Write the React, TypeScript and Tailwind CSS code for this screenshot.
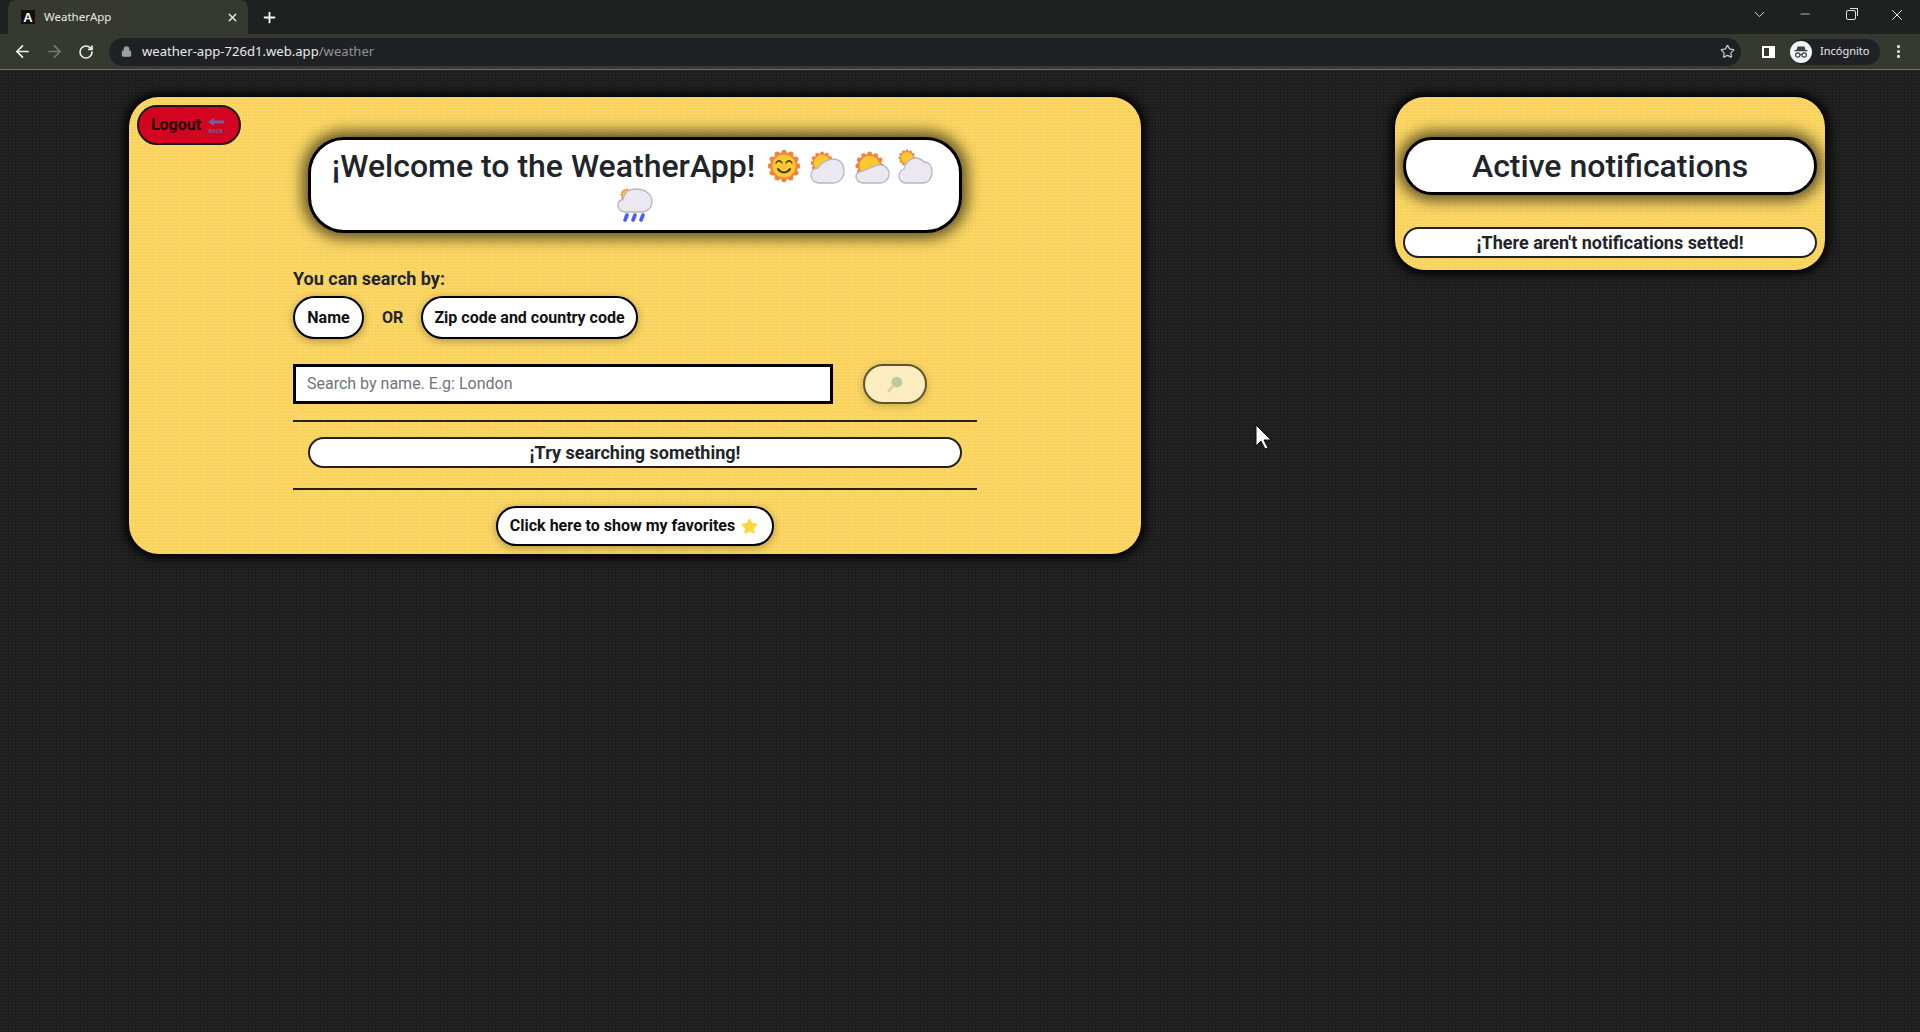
import React from "react";
import { ArrowLeft, ArrowRight, RotateCw, Lock, Star, X, Plus, ChevronDown, Minus, EllipsisVertical } from "lucide-react";

function SunSpikes({ cx, cy, r }: { cx: number; cy: number; r: number }) {
  const pts = Array.from({ length: 12 }, (_, i) => (i * Math.PI) / 6);
  return (
    <g>
      {pts.map((a, i) => (
        <circle key={i} cx={cx + Math.cos(a) * r} cy={cy + Math.sin(a) * r} r={r * 0.2} fill="#f4813f" />
      ))}
      <circle cx={cx} cy={cy} r={r} fill="#f4813f" />
      <circle cx={cx} cy={cy} r={r * 0.86} fill="#fdc92e" />
    </g>
  );
}

function SunFace() {
  return (
    <svg viewBox="0 0 36 36" className="w-[36px] h-[36px] shrink-0">
      <SunSpikes cx={18} cy={18} r={13.5} />
      <path d="M10 15c1.500-3 4.500-3 6 0M20 15c1.500-3 4.500-3 6 0" stroke="#3b2f20" strokeWidth="1.300" fill="none" strokeLinecap="round" />
      <path d="M12 21c3 4.500 9 4.500 12 0" stroke="#3b2f20" strokeWidth="2" fill="none" strokeLinecap="round" />
    </svg>
  );
}

function Cloud({ cx, cy, r, d }: { cx: number; cy: number; r: number; d: string }) {
  return (
    <svg viewBox="0 0 36 36" className="w-[36px] h-[36px] shrink-0">
      <SunSpikes cx={cx} cy={cy} r={r} />
      <path d={d} fill="#ece8f2" stroke="#b9b5c4" strokeWidth="1.300" />
    </svg>
  );
}

function RainCloud() {
  return (
    <svg viewBox="0 0 36 36" className="w-[36px] h-[36px] shrink-0 -mt-[1px]">
      <SunSpikes cx={10} cy={8} r={5.500} />
      <path d="M8 25C4 25 1 22 1 18.500C1 15 3 13 6 12.500C7 6 12 2 19 2C28 2 35 7 35 14.500C35 21 30 25 24 25Z" fill="#ece8f2" stroke="#b9b5c4" strokeWidth="1.300" />
      <path d="M10 28l-2 5M18 28l-2 5M26 28l-2 5" stroke="#4a5ff0" strokeWidth="3.600" strokeLinecap="round" />
    </svg>
  );
}

function BackIcon() {
  return (
    <svg viewBox="0 0 18 18" className="w-[18px] h-[18px] shrink-0">
      <path d="M1 6l6-4v2.500h10v3H7V10z" fill="#6d5fa8" />
      <text x="9" y="16.500" fontSize="5.500" fontWeight="700" textAnchor="middle" fill="#6d5fa8" fontFamily="Roboto, sans-serif">BACK</text>
    </svg>
  );
}

function Incognito() {
  return (
    <svg viewBox="0 0 22 22" className="w-[22px] h-[22px] shrink-0">
      <circle cx="11" cy="11" r="11" fill="#f1f3f4" />
      <path d="M7.500 5.500h7l1 3.500h2v1.300h-13V9h2z" fill="#3c4043" />
      <circle cx="7.800" cy="14" r="2.200" fill="none" stroke="#3c4043" strokeWidth="1.200" />
      <circle cx="14.200" cy="14" r="2.200" fill="none" stroke="#3c4043" strokeWidth="1.200" />
      <path d="M10 13.500h2" stroke="#3c4043" strokeWidth="1.200" />
    </svg>
  );
}

function BrowserChrome() {
  return (
    <div className="h-[70px] flex flex-col bg-[#1f2120] font-['Noto_Sans',sans-serif]">
      <div className="h-[34px] flex items-end pl-[8px]">
        <div className="w-[240px] h-[34px] bg-[#36392f] rounded-t-[8px] flex items-center pl-[13px] pr-[9px] gap-[9px]">
          <span className="w-[14px] h-[14px] bg-[#111] flex items-center justify-center text-white text-[13px] font-bold font-['Liberation_Sans',sans-serif] leading-none">A</span>
          <span className="text-[11.500px] text-[#e8eaed] flex-1">WeatherApp</span>
          <X size={13} strokeWidth={2.500} className="text-[#e8eaed]" />
        </div>
        <div className="w-[40px] h-[34px] flex items-center justify-center ml-[1px]">
          <Plus size={17} strokeWidth={2.500} className="text-white" />
        </div>
        <div className="flex-1" />
        <div className="h-[34px] flex items-start pt-[6px] text-[#d8d8d8]">
          <div className="w-[46px] flex justify-center"><ChevronDown size={17} strokeWidth={1.400} /></div>
          <div className="w-[46px] flex justify-center"><Minus size={14} strokeWidth={1.400} className="mt-[1px]" /></div>
          <div className="w-[46px] flex justify-center">
            <span className="relative w-[10px] h-[10px] border border-[#e0e0e0] rounded-[2px] mt-[4px] before:content-[''] before:absolute before:top-[-3px] before:right-[-3px] before:w-[8px] before:h-[8px] before:border-t before:border-r before:border-[#e0e0e0]" />
          </div>
          <div className="w-[46px] flex justify-center"><X size={18} strokeWidth={1.200} className="text-white" /></div>
        </div>
      </div>
      <div className="h-[36px] bg-[#36392f] flex items-center pl-[13px] pr-[13px] border-b border-[#6f706c] box-content">
        <ArrowLeft size={19} strokeWidth={2.200} className="text-[#eef0f0]" />
        <ArrowRight size={19} strokeWidth={2.200} className="text-[#777a74] ml-[13px]" />
        <RotateCw size={16} strokeWidth={2.400} className="text-[#eef0f0] ml-[14px]" />
        <div className="h-[28px] ml-[15px] flex-1 bg-[#202124] rounded-full flex items-center pl-[12px] pr-[6px]">
          <Lock size={11} strokeWidth={2.500} className="text-[#9aa0a6]" fill="#9aa0a6" />
          <span className="ml-[10px] text-[13.100px] text-[#e8eaed]">weather-app-726d1.web.app<span className="text-[#8f9296]">/weather</span></span>
          <div className="flex-1" />
          <Star size={15} strokeWidth={2} className="text-[#c4c7c5]" />
        </div>
        <span className="w-[13px] h-[12px] ml-[21px] border-2 border-r-[6px] border-white" />
        <div className="ml-[15px] h-[26px] w-[90px] bg-[#202124] rounded-full flex items-center gap-[8px]">
          <Incognito />
          <span className="text-[11px] text-[#e8eaed]">Incógnito</span>
        </div>
        <EllipsisVertical size={17} strokeWidth={2.500} className="text-[#e8eaed] ml-[10px]" />
      </div>
    </div>
  );
}

const pill = "bg-white border-2 border-black rounded-full text-[#111] font-bold";
const card = "bg-[#f9d35e] bg-[radial-gradient(#ffe285_1px,transparent_1px)] bg-[length:3px_3px] rounded-[30px] shadow-[0_0_10px_4px_#000]";

export default function App() {
  return (
    <div className="min-h-[1032px] bg-[#1e1e1e] bg-[radial-gradient(#2e2e2e_1px,transparent_1px)] bg-[length:3px_3px] font-['Roboto',sans-serif] text-[#212529]">
      <BrowserChrome />
      <main className="flex justify-between items-start pt-[27px] pl-[129px] pr-[95px]">
        <section className={"relative w-[1012px] h-[457px] pt-[40px] " + card}>
          <button className="absolute left-[8px] top-[8px] w-[104px] h-[40px] bg-[#d20420] border-2 border-[#1a1a1a] rounded-full flex items-center justify-center gap-[6px] text-[16px] font-bold text-[#1a0006]">
            <span className="-ml-[2px]">Logout</span> <BackIcon />
          </button>
          <div className="w-[684px] mx-auto">
            <div className="mx-[15px] h-[96px] bg-white border-[3px] border-black rounded-[36px] shadow-[0_0_14px_6px_rgba(40,35,15,0.7)] flex flex-col items-center pt-[4px]">
              <div className="flex items-center h-[44px] pr-[4px]">
                <span className="text-[32px] leading-[40px] font-medium text-[#212529] mr-[11px]">¡Welcome to the WeatherApp!</span>
                <SunFace />
                <span className="w-[8px]" />
                <Cloud cx={12} cy={15} r={9.500} d="M9 35C4 35 1 31 1 27C1 23 4 20 8 20C11 15 17 11 23 11C30 11 34 16 34 23C34 30 29 35 23 35Z" />
                <span className="w-[8px]" />
                <Cloud cx={15.700} cy={18} r={12} d="M9 35C5 35 2 32 2 28.500C2 26 4 24 7 23.500L24 17C30 16 35 20 35 26C35 31 31 35 26 35Z" />
                <span className="w-[8px]" />
                <Cloud cx={9} cy={10} r={7} d="M8 35C4 35 1 32 1 28C1 24 3 22 6 21C7 15 12 10 18 10C21 10 24 12 26 14C31 14 34 18 34 24C34 31 30 35 25 35Z" />
              </div>
              <RainCloud />
            </div>
            <div className="mt-[35px] text-[18px] leading-[22px] font-bold text-[#212529]">You can search by:</div>
            <div className="mt-[6px] flex items-center h-[43px]">
              <button className={pill + " w-[71px] h-[43px] text-[16px] shadow-[0_2px_8px_rgba(0,0,0,0.3)]"}>Name</button>
              <span className="ml-[18px] w-[39px] text-[16px] font-bold text-[#212529]">OR</span>
              <button className={pill + " w-[217px] h-[43px] text-[16px] shadow-[0_2px_8px_rgba(0,0,0,0.3)]"}>Zip code and country code</button>
            </div>
            <div className="mt-[25px] flex items-center h-[40px]">
              <input readOnly placeholder="Search by name. E.g: London" className="w-[540px] h-[40px] bg-white border-[3px] border-black px-[11px] pb-[2px] text-[16px] placeholder:text-[#6c757d] outline-none" />
              <button className="ml-[30px] w-[64px] h-[40px] bg-[#fbedc0] border-[2px] border-[#5f5430] rounded-full flex items-center justify-center shadow-[0_2px_8px_rgba(0,0,0,0.2)]">
                <svg viewBox="0 0 20 20" className="w-[18px] h-[18px]">
                  <circle cx="12" cy="8" r="6" fill="#b9c9a0" />
                  <path d="M8 12l-5 6" stroke="#e8c8b0" strokeWidth="3" strokeLinecap="round" />
                </svg>
              </button>
            </div>
            <hr className="mt-[16px] border-t-2 border-[#222]" />
            <div className="mx-[15px] mt-[15px] h-[31px] bg-white border-2 border-[#222] rounded-full flex items-center justify-center text-[18px] font-bold text-[#212529]">¡Try searching something!</div>
            <hr className="mt-[20px] border-t-2 border-[#222]" />
            <div className="mt-[16px] flex justify-center">
              <button className={pill + " w-[278px] h-[40px] text-[16px] flex items-center justify-center gap-[6px] shadow-[0_2px_8px_rgba(0,0,0,0.3)] bg-[#f5f4f8]"}>
                <span className="-ml-[2px]">Click here to show my favorites</span>
                <Star size={17} fill="#fbd93a" stroke="#fbd93a" />
              </button>
            </div>
          </div>
        </section>
        <aside className={"w-[430px] h-[173px] pt-[40px] px-[8px] " + card}>
          <div className="h-[58px] bg-white border-[3px] border-black rounded-full shadow-[0_0_14px_6px_rgba(40,35,15,0.7)] flex items-center justify-center text-[32px] font-medium text-[#212529]">Active notifications</div>
          <div className="mt-[32px] h-[31px] bg-white border-2 border-[#222] rounded-full flex items-center justify-center pb-[1px] text-[18px] font-bold text-[#212529]">¡There aren't notifications setted!</div>
        </aside>
      </main>
      <svg viewBox="0 0 18 26" className="absolute left-[1255px] top-[424px] w-[18px] h-[26px]">
        <path d="M1 1v21l5-5 4 8 3-1-4-8h7z" fill="#fff" stroke="#111" strokeWidth="1" />
      </svg>
    </div>
  );
}
